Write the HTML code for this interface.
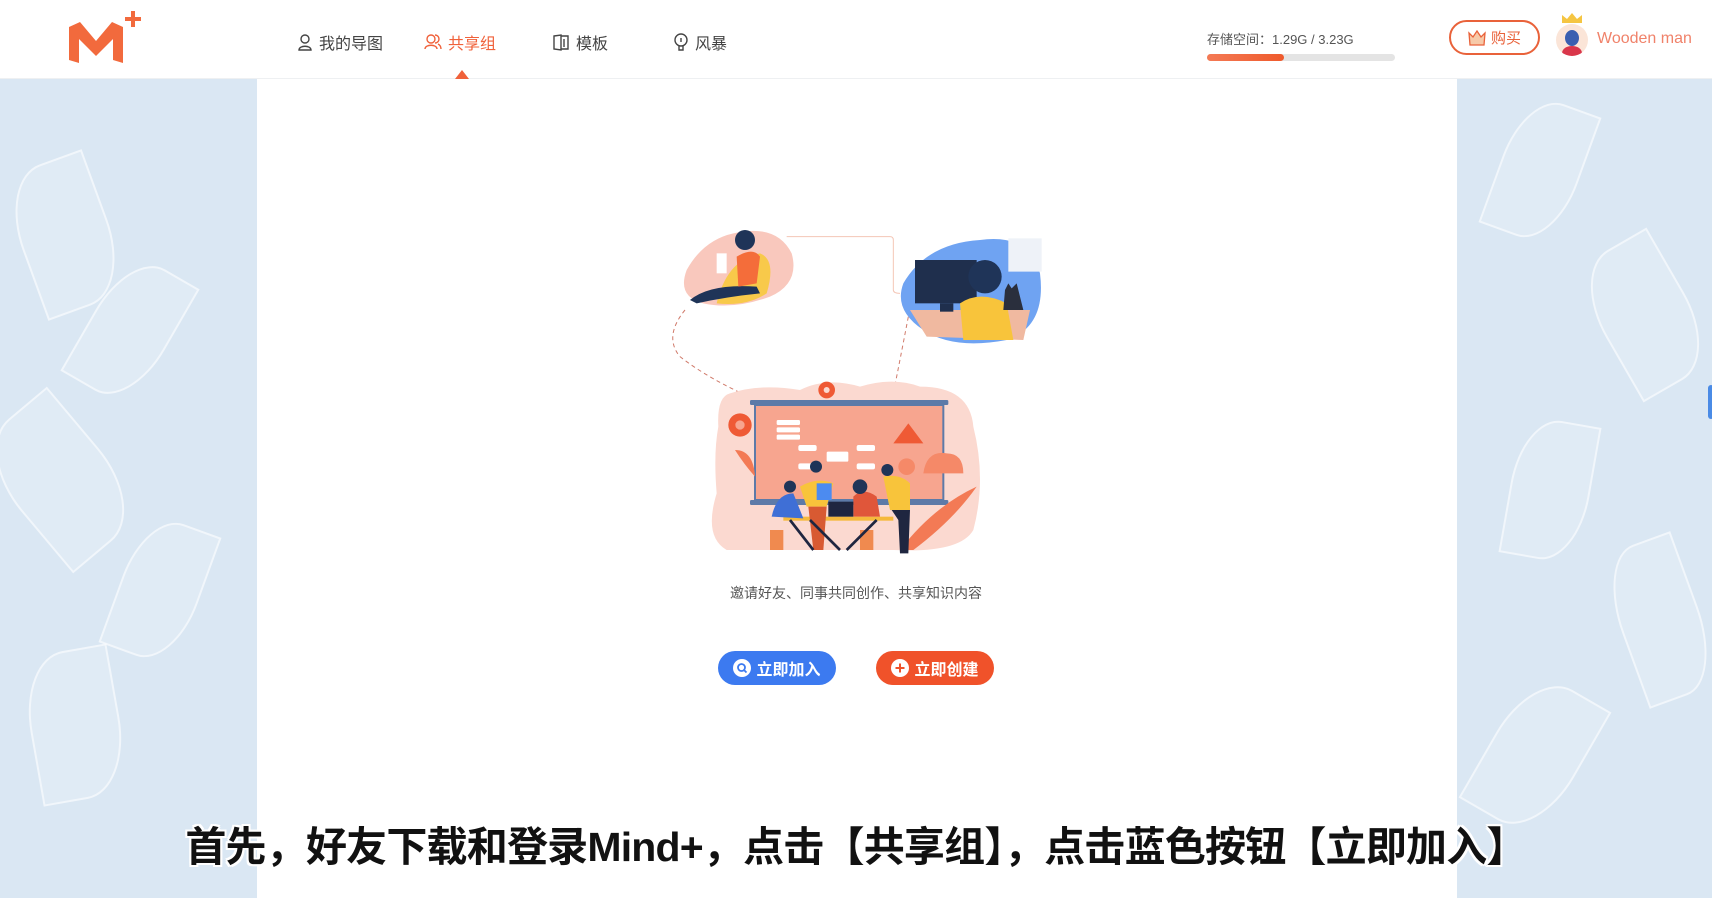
<!DOCTYPE html>
<html><head><meta charset="utf-8"><style>
*{margin:0;padding:0;box-sizing:border-box}
body{width:1712px;height:898px;overflow:hidden;background:#dae7f3;font-family:"Liberation Sans","Noto Sans CJK SC",sans-serif;position:relative}
.hdr{position:absolute;left:0;top:0;width:1712px;height:79px;background:#fff;border-bottom:1px solid #eef0f2}
.nav{position:absolute;top:30px;font-size:16px;color:#444;display:flex;align-items:center;gap:6px}
.main{position:absolute;left:257px;top:79px;width:1200px;height:819px;background:#fff}
.leaf{position:absolute;border:2px solid rgba(255,255,255,.55);background:rgba(255,255,255,.18);border-radius:50% 0 50% 0}
.btn{position:absolute;top:651px;width:118px;height:34px;border-radius:17px;color:#fff;font-size:16px;font-weight:bold;display:flex;align-items:center;justify-content:center;gap:5px}
.sub{position:absolute;left:0;width:1712px;top:813px;text-align:center;font-size:41px;font-weight:bold;letter-spacing:-0.8px;color:#111;text-shadow:2px 2px 0 #fff,-2px -2px 0 #fff,2px -2px 0 #fff,-2px 2px 0 #fff,0 2px 0 #fff,0 -2px 0 #fff,2px 0 0 #fff,-2px 0 0 #fff}
</style></head><body>
<div class="leaf" style="left:20px;top:160px;width:90px;height:150px;transform:rotate(-20deg)"></div>
<div class="leaf" style="left:90px;top:260px;width:80px;height:140px;transform:rotate(30deg)"></div>
<div class="leaf" style="left:10px;top:400px;width:100px;height:160px;transform:rotate(-40deg)"></div>
<div class="leaf" style="left:120px;top:520px;width:80px;height:140px;transform:rotate(20deg)"></div>
<div class="leaf" style="left:30px;top:650px;width:90px;height:150px;transform:rotate(-10deg)"></div>
<div class="leaf" style="left:1500px;top:100px;width:80px;height:140px;transform:rotate(20deg)"></div>
<div class="leaf" style="left:1600px;top:240px;width:90px;height:150px;transform:rotate(-30deg)"></div>
<div class="leaf" style="left:1510px;top:420px;width:80px;height:140px;transform:rotate(10deg)"></div>
<div class="leaf" style="left:1620px;top:540px;width:80px;height:160px;transform:rotate(-20deg)"></div>
<div class="leaf" style="left:1490px;top:680px;width:90px;height:150px;transform:rotate(30deg)"></div>
<div style="position:absolute;left:1708px;top:385px;width:6px;height:34px;background:#4a8be6;border-radius:3px"></div>

<div class="main"></div>
<div class="hdr">
<svg style="position:absolute;left:66px;top:8px" width="80" height="58" viewBox="0 0 80 58">
<path d="M3 19 L14 14 L30 33 L46 14 L57 19 L57 55 L47 52 L47 31 L30 48 L13 31 L13 55 L3 52Z" fill="#f26a3d"/>
<path d="M67 3v16M59 11h16" stroke="#f26a3d" stroke-width="4"/>
</svg>
<div class="nav" style="left:297px"><svg width="16" height="18" viewBox="0 0 16 18" fill="none" stroke="#444" stroke-width="1.4"><circle cx="8" cy="6" r="4"/><path d="M2 17c0-5 12-5 12 0z"/></svg>我的导图</div>
<div class="nav" style="left:424px;color:#f0613a"><svg width="18" height="18" viewBox="0 0 18 18" fill="none" stroke="#f0613a" stroke-width="1.4"><circle cx="7" cy="6" r="4"/><path d="M1 16c0-5 12-5 12 0M11 2a4 4 0 010 8M14 11c2 1 3 3 3 5"/></svg>共享组</div>
<div style="position:absolute;left:455px;top:70px;width:0;height:0;border-left:7px solid transparent;border-right:7px solid transparent;border-bottom:9px solid #f0613a"></div>
<div class="nav" style="left:552px"><svg width="18" height="18" viewBox="0 0 18 18" fill="none" stroke="#444" stroke-width="1.4"><path d="M2 3l7-1v15l-7-1zM9 3h7v13H9M12 6v8"/></svg>模板</div>
<div class="nav" style="left:673px"><svg width="16" height="18" viewBox="0 0 16 18" fill="none" stroke="#444" stroke-width="1.4"><circle cx="8" cy="7" r="6"/><path d="M6 13v4h4v-4M8 5v4"/></svg>风暴</div>
<div style="position:absolute;left:1207px;top:29px;font-size:13px;color:#555">存储空间：1.29G / 3.23G</div>
<div style="position:absolute;left:1207px;top:54px;width:188px;height:7px;border-radius:4px;background:#e4e4e4"><div style="width:77px;height:7px;border-radius:4px;background:linear-gradient(90deg,#f47a55,#ef5a2c)"></div></div>
<div style="position:absolute;left:1449px;top:20px;width:91px;height:35px;border:2px solid #e9623a;border-radius:18px;color:#e9623a;font-size:15px;display:flex;align-items:center;justify-content:center;gap:5px"><svg width="18" height="16" viewBox="0 0 18 16"><path d="M1 3l4 4 4-6 4 6 4-4-1 12H2z" fill="#f7c9a8" stroke="#e9623a" stroke-width="1.3"/></svg>购买</div>
<div style="position:absolute;left:1556px;top:24px;width:32px;height:32px;border-radius:50%;background:#fbe5d8;overflow:hidden"><div style="position:absolute;left:9px;top:6px;width:14px;height:16px;border-radius:50%;background:#3a5fb0"></div><div style="position:absolute;left:6px;top:22px;width:20px;height:14px;border-radius:50%;background:#d9364a"></div></div>
<div style="position:absolute;left:1562px;top:13px;width:20px;height:10px;background:#f5c542;clip-path:polygon(0 100%,0 20%,25% 60%,50% 0,75% 60%,100% 20%,100% 100%)"></div>
<div style="position:absolute;left:1597px;top:30px;font-size:16px;color:#f0826a">Wooden man</div>
</div>

<svg style="position:absolute;left:660px;top:220px" width="390" height="340" viewBox="0 0 1170 1020">
<path d="M380 50 H690 Q700 50 700 60 V210 Q700 220 720 220" fill="none" stroke="#f4c6b6" stroke-width="3"/>
<path d="M75 270 Q10 350 60 410 Q150 480 290 540" fill="none" stroke="#d07a6a" stroke-width="3" stroke-dasharray="12 10"/>
<path d="M745 290 Q720 420 700 520 L650 600" fill="none" stroke="#d07a6a" stroke-width="3" stroke-dasharray="12 10"/>
<path d="M80 150 Q130 60 220 40 Q350 10 395 100 Q420 190 330 230 Q220 270 130 250 Q50 230 80 150Z" fill="#f9c8bd"/>
<path d="M170 250 Q200 120 300 100 Q350 120 320 220 Q260 260 170 250Z" fill="#f8c94a"/>
<path d="M90 240 Q150 190 290 200 L300 220 Q200 230 110 250Z" fill="#1f3458"/>
<path d="M230 110 Q280 80 300 110 L290 190 L235 200Z" fill="#f46d3a"/>
<circle cx="255" cy="60" r="30" fill="#1f3458"/>
<path d="M170 100h30v60h-30z" fill="#fff"/>
<path d="M730 190 Q800 70 960 60 Q1110 40 1140 160 Q1160 320 1040 360 Q880 390 790 330 Q700 270 730 190Z" fill="#6fa3f2"/>
<path d="M1045 55h100v100h-100z" fill="#eef2f8"/>
<path d="M750 270 L1110 270 L1090 360 L800 350Z" fill="#f0b9a0"/>
<rect x="765" y="120" width="185" height="130" fill="#1f2f4d"/>
<rect x="840" y="250" width="40" height="25" fill="#1f2f4d"/>
<path d="M900 250 Q960 210 1040 250 L1060 360 L910 360Z" fill="#f8c43b"/>
<circle cx="975" cy="170" r="50" fill="#1f3458"/>
<path d="M1035 210 L1045 190 L1055 205 L1070 190 L1075 210 L1090 270 L1030 270Z" fill="#2a2f3d"/>
<path d="M210 520 Q300 490 420 510 Q500 470 600 500 Q700 470 780 500 Q930 500 940 620 Q980 780 940 930 Q900 1000 700 990 L200 990 Q130 950 170 820 Q160 700 175 620 Q170 530 210 520Z" fill="#fbd9d0"/>
<rect x="270" y="540" width="595" height="15" fill="#5d7aa8" rx="4"/>
<rect x="285" y="555" width="565" height="285" fill="#f7a58f" stroke="#5d7aa8" stroke-width="6"/>
<rect x="270" y="840" width="595" height="15" fill="#5d7aa8" rx="4"/>
<g fill="#fff"><rect x="350" y="600" width="70" height="15" rx="4"/><rect x="350" y="622" width="70" height="15" rx="4"/><rect x="350" y="644" width="70" height="15" rx="4"/>
<rect x="415" y="675" width="55" height="18" rx="6"/><rect x="415" y="730" width="55" height="18" rx="6"/><rect x="500" y="695" width="65" height="30" rx="4"/><rect x="590" y="675" width="55" height="18" rx="6"/><rect x="590" y="730" width="55" height="18" rx="6"/></g>
<path d="M700 670 L745 610 L790 670Z" fill="#ef5a35"/>
<circle cx="740" cy="740" r="25" fill="#f58968"/>
<circle cx="240" cy="615" r="35" fill="#ef5a35"/><circle cx="240" cy="615" r="14" fill="#f7a58f"/>
<circle cx="500" cy="510" r="25" fill="#ef5a35"/><circle cx="500" cy="510" r="9" fill="#fbd9d0"/>
<path d="M790 760 Q800 690 860 700 Q910 700 910 760Z" fill="#f58968"/>
<path d="M720 990 Q820 860 950 800 Q880 900 760 990Z" fill="#f37a55"/>
<path d="M225 690 Q280 690 285 770 Q250 730 225 690Z" fill="#f37a55"/>
<rect x="370" y="890" width="330" height="12" fill="#f5b93c"/>
<path d="M335 890 Q350 820 400 820 L430 895Z" fill="#3f6fd6"/>
<circle cx="390" cy="800" r="18" fill="#1f3458"/>
<path d="M420 800 Q470 770 520 790 L500 860 L440 860Z" fill="#f8c43b"/>
<path d="M445 860 L500 860 L490 990 L460 990Z" fill="#d85a32"/>
<circle cx="468" cy="740" r="18" fill="#1f3458"/>
<path d="M580 830 Q610 800 650 830 L660 890 L580 890Z" fill="#e0563a"/>
<circle cx="600" cy="800" r="22" fill="#1f3458"/>
<path d="M670 770 Q720 760 750 790 L750 870 L690 870Z" fill="#f8c43b"/>
<path d="M695 870 L750 870 L745 1000 L720 1000 L715 900Z" fill="#1f2640"/>
<circle cx="682" cy="750" r="18" fill="#1f3458"/>
<rect x="505" y="845" width="75" height="45" fill="#1f2640"/>
<rect x="470" y="790" width="45" height="50" fill="#4c8bf0"/>
<path d="M330 930h40v60h-40zM600 930h40v60h-40z" fill="#f08a4f"/>
<path d="M390 900 L460 990 M650 900 L560 990 M450 900 L540 990" stroke="#1f2640" stroke-width="8"/>
</svg>

<div style="position:absolute;left:0;width:1712px;top:583px;text-align:center;font-size:14px;color:#555">邀请好友、同事共同创作、共享知识内容</div>
<div class="btn" style="left:718px;background:#3c7af0"><svg width="18" height="18" viewBox="0 0 18 18"><circle cx="9" cy="9" r="9" fill="#fff"/><circle cx="8.5" cy="8.5" r="3.5" fill="none" stroke="#3c7af0" stroke-width="1.8"/><path d="M11 11l2.5 2.5" stroke="#3c7af0" stroke-width="1.8"/></svg>立即加入</div>
<div class="btn" style="left:876px;background:#f0522a"><svg width="18" height="18" viewBox="0 0 18 18"><circle cx="9" cy="9" r="9" fill="#fff"/><path d="M9 4.5v9M4.5 9h9" stroke="#f0522a" stroke-width="2"/></svg>立即创建</div>

<div class="sub">首先，好友下载和登录Mind+，点击【共享组】，点击蓝色按钮【立即加入】</div>
</body></html>
